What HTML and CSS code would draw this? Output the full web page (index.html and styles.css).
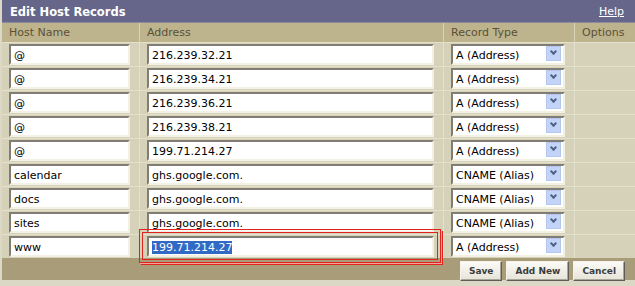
FILE: index.html
```html
<!DOCTYPE html>
<html lang="en">
<head>
  <meta charset="UTF-8" />
  <title>Edit Host Records</title>
  <link rel="stylesheet" href="styles.css">
</head>
<body>
  <div class="panel">
    <div class="titlebar">
      <span class="title">Edit Host Records</span>
      <a href="#" class="help">Help</a>
    </div>

    <table class="records">
      <thead>
        <tr>
          <th class="col-host">Host Name</th>
          <th class="col-addr">Address</th>
          <th class="col-type">Record Type</th>
          <th class="col-opt">Options</th>
        </tr>
      </thead>
      <tbody>
        <tr>
          <td><div class="field host">@</div></td>
          <td><div class="field addr">216.239.32.21</div></td>
          <td><div class="field select">A (Address)<span class="arrow"></span></div></td>
          <td></td>
        </tr>
        <tr>
          <td><div class="field host">@</div></td>
          <td><div class="field addr">216.239.34.21</div></td>
          <td><div class="field select">A (Address)<span class="arrow"></span></div></td>
          <td></td>
        </tr>
        <tr>
          <td><div class="field host">@</div></td>
          <td><div class="field addr">216.239.36.21</div></td>
          <td><div class="field select">A (Address)<span class="arrow"></span></div></td>
          <td></td>
        </tr>
        <tr>
          <td><div class="field host">@</div></td>
          <td><div class="field addr">216.239.38.21</div></td>
          <td><div class="field select">A (Address)<span class="arrow"></span></div></td>
          <td></td>
        </tr>
        <tr>
          <td><div class="field host">@</div></td>
          <td><div class="field addr">199.71.214.27</div></td>
          <td><div class="field select">A (Address)<span class="arrow"></span></div></td>
          <td></td>
        </tr>
        <tr>
          <td><div class="field host">calendar</div></td>
          <td><div class="field addr">ghs.google.com.</div></td>
          <td><div class="field select">CNAME (Alias)<span class="arrow"></span></div></td>
          <td></td>
        </tr>
        <tr>
          <td><div class="field host">docs</div></td>
          <td><div class="field addr">ghs.google.com.</div></td>
          <td><div class="field select">CNAME (Alias)<span class="arrow"></span></div></td>
          <td></td>
        </tr>
        <tr>
          <td><div class="field host">sites</div></td>
          <td><div class="field addr">ghs.google.com.</div></td>
          <td><div class="field select">CNAME (Alias)<span class="arrow"></span></div></td>
          <td></td>
        </tr>
        <tr>
          <td><div class="field host">www</div></td>
          <td class="marked">
            <div class="field addr"><span class="selected">199.71.214.27</span></div>
            <div class="highlight"></div>
          </td>
          <td><div class="field select">A (Address)<span class="arrow"></span></div></td>
          <td></td>
        </tr>
      </tbody>
    </table>

    <div class="footer">
      <button>Save</button>
      <button>Add New</button>
      <button>Cancel</button>
    </div>
  </div>
</body>
</html>
```

FILE: styles.css
```css
body {
  margin: 0;
  background: #dcd8c6;
  font-family: "DejaVu Sans", Verdana, sans-serif;
  font-size: 11px;
}
.panel {
  width: 635px;
  padding-left: 2px;
  box-sizing: border-box;
}
.titlebar {
  display: flex;
  justify-content: space-between;
  align-items: center;
  height: 22px;
  background: #66668a;
  color: #fff;
  padding: 0 11px 0 8px;
  border-bottom: 1px solid #8e8aa0;
}
.title {
  font-weight: bold;
  font-size: 11.5px;
  padding-top: 1px;
}
.help {
  color: #fff;
  font-size: 11px;
}
.records {
  width: 633px;
  border-collapse: collapse;
  background: #d6d1b9;
}
.records th {
  height: 19px;
  background: #bdb48d;
  color: #5b5038;
  font-weight: normal;
  text-align: left;
  padding: 0 0 0 7px;
  border-left: 1px solid #d8d3ba;
}
.records th:first-child,
.records td:first-child {
  border-left: none;
}
.records td {
  height: 23px;
  padding: 0 0 0 7px;
  border-left: 1px solid #e4e0cc;
  border-top: 1px solid #e4e0cc;
  vertical-align: middle;
}
.col-host { width: 130px; }
.col-addr { width: 296px; }
.col-type { width: 123px; }
.field {
  height: 21px;
  box-sizing: border-box;
  background: #fff;
  color: #000;
  border-top: 2px solid #7f7d74;
  border-left: 2px solid #7f7d74;
  border-right: 2px solid #f3f0e4;
  border-bottom: 2px solid #f3f0e4;
  padding: 2px 3px 0;
  line-height: 15px;
  white-space: nowrap;
}
.host { width: 121px; }
.addr { width: 287px; }
.select {
  position: relative;
  width: 114px;
}
.arrow {
  position: absolute;
  right: 2px;
  top: 0;
  width: 15px;
  height: 15px;
  background: #c3d4f7;
  border: 1px solid #b4c6ee;
  box-sizing: border-box;
}
.arrow::after {
  content: "";
  position: absolute;
  left: 4px;
  top: 2px;
  width: 3px;
  height: 3px;
  border-right: 2px solid #4d6185;
  border-bottom: 2px solid #4d6185;
  transform: rotate(45deg);
}
.marked {
  position: relative;
}
.selected {
  background: #316ac5;
  color: #fff;
}
.highlight {
  position: absolute;
  left: -1px;
  top: -6px;
  width: 302px;
  height: 34px;
  box-sizing: border-box;
  border: 1px solid #e0231c;
  box-shadow: 1px 1px 0 #f4a39a, 2px 2px 0 #e0231c;
  pointer-events: none;
}
.highlight::after {
  content: "";
  position: absolute;
  left: 2px;
  top: 2px;
  right: 2px;
  bottom: 2px;
  border: 1px solid #e0231c;
}
.footer {
  display: flex;
  justify-content: flex-end;
  gap: 4px;
  height: 25px;
  width: 633px;
  box-sizing: border-box;
  padding: 3px 10px 0 0;
  background: #a89d78;
  border-bottom: 3px solid #dcd8c6;
}
.footer button {
  height: 20px;
  padding: 0 8px;
  font-family: "DejaVu Sans", Verdana, sans-serif;
  font-size: 9px;
  font-weight: bold;
  color: #3c3c3c;
  background: linear-gradient(#fbfaf6, #e6e3d8);
  border: 1px solid #5f5d58;
  border-top-color: #f4f2ea;
  border-left-color: #f4f2ea;
  box-shadow: inset -1px -1px 0 #a9a69c;
}
```
